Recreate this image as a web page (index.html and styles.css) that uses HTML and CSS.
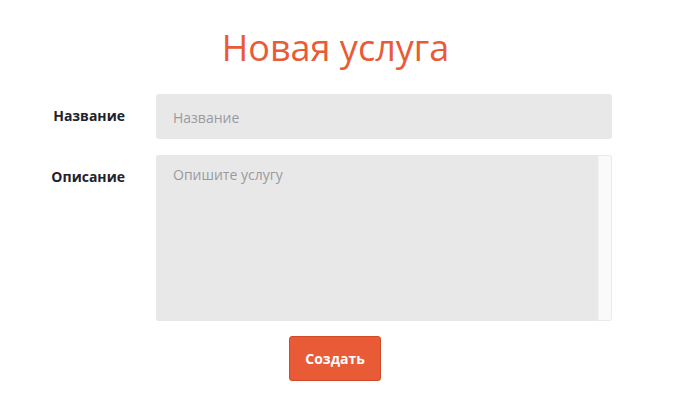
FILE: index.html
```html
<!DOCTYPE html>
<html lang="ru">
<head>
    <meta charset="UTF-8">
    <meta name="viewport" content="width=device-width, initial-scale=1.0">
    <title>Новая услуга</title>
    <link rel="stylesheet" href="styles.css">
</head>
<body>
    <div class="page">
        <h1 class="title">Новая услуга</h1>
        <form class="service-form">
            <div class="form-row">
                <label for="name">Название</label>
                <input type="text" id="name" placeholder="Название">
            </div>
            <div class="form-row">
                <label for="description">Описание</label>
                <div class="textarea-box">
                    <textarea id="description" placeholder="Опишите услугу"></textarea>
                    <span class="scroll-track"></span>
                </div>
            </div>
            <div class="form-actions">
                <button type="submit">Создать</button>
            </div>
        </form>
    </div>
</body>
</html>
```

FILE: styles.css
```css
/* Page */
body {
    margin: 0;
    font-family: "Open Sans", Arial, sans-serif;
    background: #fff;
    color: #222;
}

.page {
    width: 676px;
}

.title {
    margin: 23px 0 21px;
    padding-right: 5px;
    text-align: center;
    font-size: 36px;
    font-weight: 400;
    line-height: 50px;
    color: #e95b36;
}

/* Form rows: label on the left, field on the right */
.form-row {
    display: flex;
    align-items: flex-start;
    gap: 31px;
    margin-bottom: 16px;
}
.form-row label {
    width: 125px;
    flex-shrink: 0;
    text-align: right;
    font-size: 14px;
    font-weight: 700;
    line-height: 20px;
    padding-top: 12px;
    color: #23222a;
}

.form-row input,
.form-row textarea {
    box-sizing: border-box;
    border: none;
    background: #e8e8e9;
    padding: 13px 17px 11px;
    font-family: "Open Sans", Arial, sans-serif;
    font-size: 14px;
    line-height: 21px;
    color: #333;
    outline: none;
}
.form-row input {
    width: 456px;
    height: 45px;
    border-radius: 3px;
}
.form-row input::placeholder,
.form-row textarea::placeholder {
    color: #9a9a9e;
}

/* Textarea with its scrollbar track */
.textarea-box {
    display: flex;
    width: 456px;
    height: 166px;
    border-radius: 3px;
    overflow: hidden;
    background: #e8e8e9;
}
.textarea-box textarea {
    flex: 1;
    height: 100%;
    resize: none;
    overflow: hidden;
    padding-top: 9px;
}
.scroll-track {
    width: 12px;
    background: #fafafa;
    border: 1px solid #ebebeb;
    border-left-color: #f3f3f3;
    border-radius: 0 3px 3px 0;
}

.form-actions {
    display: flex;
    justify-content: center;
    margin-top: -1px;
}
.form-actions button {
    width: 92px;
    height: 45px;
    margin-left: -6px;
    border: 1px solid #d14a28;
    border-radius: 3px;
    background: #e95b36;
    color: #fff;
    font-family: "Open Sans", Arial, sans-serif;
    font-size: 14px;
    font-weight: 700;
    cursor: pointer;
}
```
